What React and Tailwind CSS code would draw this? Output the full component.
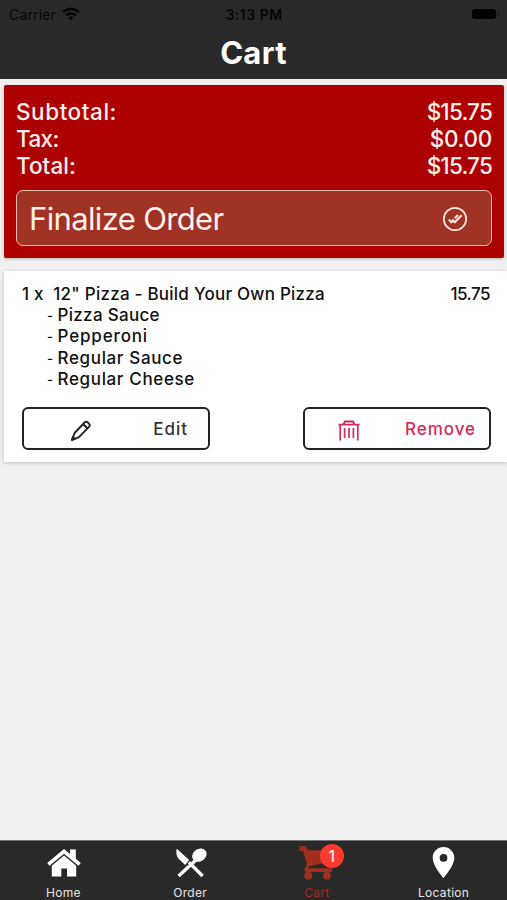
import React from 'react';
import { MdLocationOn } from 'react-icons/md';

const totals = [
  { label: 'Subtotal:', value: '$15.75', labelClass: 'tracking-[0.55px]', valueClass: 'tracking-[-0.8px]' },
  { label: 'Tax:', value: '$0.00', labelClass: 'tracking-[-0.6px]', valueClass: 'tracking-[-0.3px]' },
  { label: 'Total:', value: '$15.75', labelClass: 'tracking-[0.05px]', valueClass: 'tracking-[-0.8px]' },
];

const toppings = [
  { name: 'Pizza Sauce', className: 'tracking-[0.3px]' },
  { name: 'Pepperoni', className: 'tracking-[0.85px]' },
  { name: 'Regular Sauce', className: 'tracking-[0.65px]' },
  { name: 'Regular Cheese', className: 'tracking-[0.65px]' },
];

function WifiIcon() {
  return (
    <svg width="18" height="14" viewBox="0 0 18 14" fill="none" stroke="#050505" strokeWidth="2.5">
      <path d="M1 5.2C5.5 0.9 12.5 0.9 17 5.2" />
      <path d="M4 8.4C6.8 5.8 11.2 5.8 14 8.4" />
      <path d="M9 13.4L6.2 10.5C7.8 9.1 10.2 9.1 11.8 10.5Z" fill="#050505" stroke="none" />
    </svg>
  );
}

function CheckCircleIcon() {
  return (
    <svg width="26" height="26" viewBox="0 0 26 26" fill="none" stroke="#fbe9e4">
      <circle cx="13" cy="13" r="11.2" strokeWidth="1.7" />
      <path d="M6.8 13.6L9.4 16.2L10.7 14.9M12.8 12.2L15.9 9.1M10.1 13.6L12.8 16.2L19.6 9.3" strokeWidth="2.1" />
    </svg>
  );
}

function PencilIcon() {
  return (
    <svg width="22" height="22" viewBox="0 0 22 22" fill="none" stroke="#222222" strokeWidth="1.9" strokeLinejoin="round">
      <path d="M2 19.8L4.6 13L14.6 2.5C15.5 1.6 16.7 1.5 17.6 2.3L19.1 3.8C20 4.7 19.9 5.9 19 6.8L9 17.2Z" />
      <path d="M13.2 4.2L17.4 8.3" />
      <path d="M2 19.8L3 17L4.8 18.8Z" fill="#222222" />
    </svg>
  );
}

function TrashIcon() {
  return (
    <svg width="22" height="21" viewBox="0 0 22 21" fill="none" stroke="#d42a5c" strokeWidth="1.7">
      <path d="M0.5 4.6H21.5" />
      <path d="M5.5 4.4L7 1.4H15L16.5 4.4" strokeWidth="2" />
      <path d="M2.2 4.5V20.4M19.8 4.5V20.4M6.6 8V18M11 8V18M15.4 8V18" />
    </svg>
  );
}

function HomeIcon() {
  return (
    <svg width="34" height="28" viewBox="0 0 34 28" fill="white">
      <path d="M17 0L23 5V0.5H28.8V9.8L33.8 14.1L31.5 16.8L17 4.8L2.5 16.8L0.2 14.1Z" />
      <path d="M17 6.6L29.2 16.8V27.5H20V19.5H14.3V27.5H4.8V16.8Z" />
    </svg>
  );
}

function UtensilsIcon() {
  return (
    <svg width="32" height="30" viewBox="0 0 32 30" fill="none">
      <path d="M3.6 28L21 12" stroke="white" strokeWidth="3.4" />
      <path d="M27.6 28L14 14.4" stroke="white" strokeWidth="3.4" />
      <path d="M1.8 0.8L14.2 12L10.2 17L3.4 10.4C1.2 7.8 0.8 3.6 1.8 0.8Z" fill="white" />
      <ellipse cx="24.4" cy="7.2" rx="7.6" ry="6.2" transform="rotate(-34 24.4 7.2)" fill="white" />
    </svg>
  );
}

function CartIcon() {
  return (
    <svg width="34" height="34" viewBox="0 0 34 34" fill="#a22e20">
      <path d="M0.5 0.3H7.2L8.7 4.2H33L30.3 16L10 20.2L9 22.3H33V26H6.2L5.3 23.6L8 18L4 5H0.5Z" />
      <circle cx="9.3" cy="29.7" r="3.9" />
      <circle cx="28" cy="29.7" r="3.9" />
    </svg>
  );
}

function StatusBar() {
  return (
    <div className="flex h-7 items-center justify-between pl-[9px] pr-2 text-[14px] text-[#050505]">
      <div className="flex flex-1 items-center gap-[6px]">
        <span className="tracking-[0.15px]">Carrier</span>
        <WifiIcon />
      </div>
      <span className="font-semibold tracking-[0.5px]">3:13 PM</span>
      <div className="flex flex-1 items-center justify-end gap-px">
        <div className="h-[10px] w-6 rounded-[3px] bg-black" />
        <div className="h-1 w-0.5 rounded-r bg-[#151515]" />
      </div>
    </div>
  );
}

function OrderSummary() {
  return (
    <section className="ml-1 mr-[3px] mt-[6px] h-[173px] rounded-[2px] bg-[#ad0000] px-3 pt-[13px] text-[#fff0ed] shadow-[0_1px_3px_rgba(0,0,0,0.25)]">
      {totals.map((row) => (
        <div key={row.label} className="flex h-[27px] items-center justify-between text-[22.5px] font-medium">
          <span className={row.labelClass}>{row.label}</span>
          <span className={row.valueClass}>{row.value}</span>
        </div>
      ))}
      <button className="mt-[11px] flex h-[56px] w-full items-center justify-between rounded-[7px] border-[1.5px] border-[#efc0b7] bg-[#a03323] pl-3 pr-[23px]">
        <span className="pt-[3px] text-[31px] tracking-[-0.65px]">Finalize Order</span>
        <span className="pt-[2px]"><CheckCircleIcon /></span>
      </button>
    </section>
  );
}

function CartItem() {
  return (
    <section className="ml-1 mt-[13px] h-[191px] bg-white pl-[18px] pr-4 pt-[13px] text-[17px] font-medium leading-[21.2px] text-[#111111] shadow-[0_1px_4px_rgba(0,0,0,0.2)]">
      <div className="flex justify-between">
        <span className="whitespace-pre tracking-[0.24px]">{'1 x  12" Pizza - Build Your Own Pizza'}</span>
        <span className="pr-px tracking-[-0.5px]">15.75</span>
      </div>
      <ul className="pl-[25px]">
        {toppings.map((topping) => (
          <li key={topping.name} className="flex">
            <span className="w-[10.5px] text-[13px]">-</span>
            <span className={topping.className}>{topping.name}</span>
          </li>
        ))}
      </ul>
      <div className="mt-[17px] flex justify-between">
        <button className="flex h-[43px] w-[188px] items-center justify-between rounded-md border-2 border-[#222222] pl-[46px] pr-[20px]">
          <span className="pt-1"><PencilIcon /></span>
          <span className="pt-[2px] text-[17px] tracking-[1px] text-[#333333]">Edit</span>
        </button>
        <button className="flex h-[43px] w-[188px] items-center justify-between rounded-md border-2 border-[#222222] pl-[33px] pr-[13px]">
          <span className="pt-1"><TrashIcon /></span>
          <span className="pt-[2px] text-[17px] tracking-[0.95px] text-[#d42a5c]">Remove</span>
        </button>
      </div>
    </section>
  );
}

function TabBar() {
  return (
    <nav className="grid h-[60px] grid-cols-4 border-t border-[#777777] bg-[#292929] text-[12px] leading-4 tracking-[0.3px] text-[#e6e6e6]">
      <a className="flex flex-col items-center">
        <span className="flex h-11 items-center pb-px pl-px"><HomeIcon /></span>
        Home
      </a>
      <a className="flex flex-col items-center">
        <span className="flex h-11 items-center pl-[2px]"><UtensilsIcon /></span>
        Order
      </a>
      <a className="flex flex-col items-center text-[#a22e20]">
        <span className="relative flex h-11 items-center pr-[2px]">
          <CartIcon />
          <span className="absolute left-[21px] top-[3px] flex size-6 items-center justify-center rounded-full bg-[#ff3b30] text-[16px] tracking-normal text-white">1</span>
        </span>
        Cart
      </a>
      <a className="flex flex-col items-center">
        <span className="flex h-11 items-center pb-px"><MdLocationOn size={37} color="white" /></span>
        Location
      </a>
    </nav>
  );
}

export default function App() {
  return (
    <div className="flex h-[900px] w-[507px] flex-col overflow-hidden bg-[#f0f0f0] font-['Inter','Liberation_Sans',sans-serif]">
      <header className="h-[79px] bg-[#292929]">
        <StatusBar />
        <h1 className="text-center text-[31px] font-bold leading-[49px] tracking-[0.3px] text-white">Cart</h1>
      </header>
      <main className="flex-1">
        <OrderSummary />
        <CartItem />
      </main>
      <TabBar />
    </div>
  );
}
